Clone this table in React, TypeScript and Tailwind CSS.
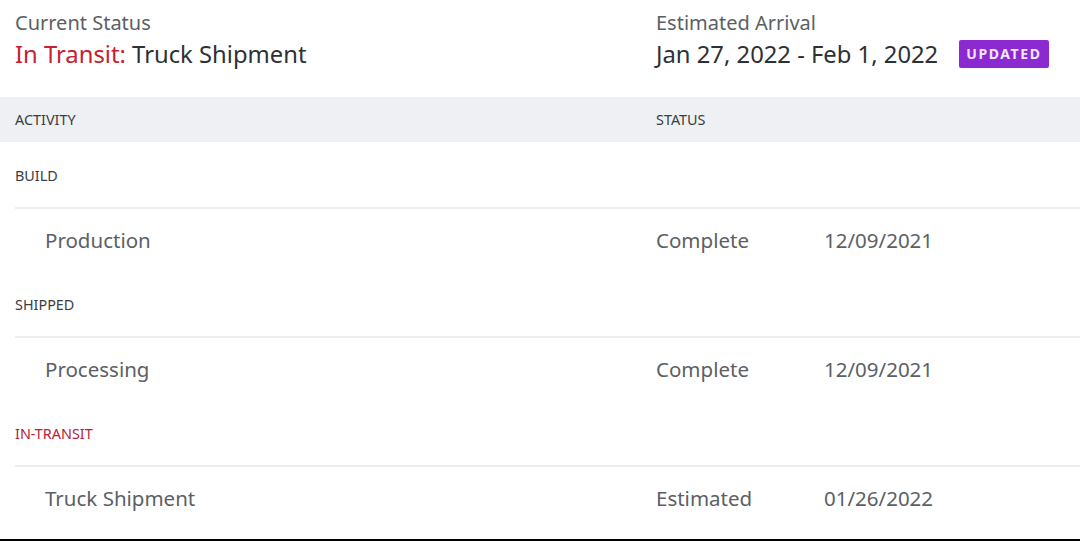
import React from "react";

const font = { fontFamily: '"Noto Sans", "Open Sans", sans-serif' };

type Item = { label: string; status: string; date: string };
type Group = { name: string; red?: boolean; items: Item[] };

const groups: Group[] = [
  { name: "BUILD", items: [{ label: "Production", status: "Complete", date: "12/09/2021" }] },
  { name: "SHIPPED", items: [{ label: "Processing", status: "Complete", date: "12/09/2021" }] },
  { name: "IN-TRANSIT", red: true, items: [{ label: "Truck Shipment", status: "Estimated", date: "01/26/2022" }] },
];

export default function App() {
  return (
    <div className="w-[1080px] h-[541px] bg-white overflow-hidden flex flex-col" style={font}>
      <div className="h-[97px] flex pl-[15px] pt-[9px]">
        <div className="w-[641px] flex flex-col">
          <div className="text-[20px] leading-[28px] text-[#5b5f64]">Current Status</div>
          <div className="text-[23.8px] leading-[32px] mt-[1px] text-[#2d3135]">
            <span className="text-[#c8202f]">In Transit:</span> Truck Shipment
          </div>
        </div>
        <div className="flex flex-col">
          <div className="text-[20px] leading-[28px] text-[#5b5f64]">Estimated Arrival</div>
          <div className="flex items-center mt-[1px]">
            <span className="text-[23.8px] leading-[32px] text-[#2d3135]">Jan 27, 2022 - Feb 1, 2022</span>
            <span className="ml-[21px] bg-[#8a2ad0] text-[#f4e6ff] text-[14px] font-bold tracking-[1.6px] leading-[28px] px-[7px] rounded-[2px]">
              UPDATED
            </span>
          </div>
        </div>
      </div>
      <div className="h-[45px] bg-[#eef0f3] flex items-center pl-[15px] text-[14.4px] text-[#3a3d42]">
        <div className="w-[641px]">ACTIVITY</div>
        <div>STATUS</div>
      </div>
      {groups.map((g) => (
        <div key={g.name} className="flex flex-col">
          <div className={`h-[65px] flex items-center pl-[15px] pt-[2px] text-[14.4px] ${g.red ? "text-[#b8213a]" : "text-[#3a3d42]"}`}>
            {g.name}
          </div>
          {g.items.map((it) => (
            <div key={it.label} className="ml-[15px] border-t-2 border-[#eceef0] h-[64px] flex items-center text-[20.5px] text-[#5c6065]">
              <div className="w-[641px] pl-[30px]">{it.label}</div>
              <div className="w-[168px]">{it.status}</div>
              <div>{it.date}</div>
            </div>
          ))}
        </div>
      ))}
      <div className="flex-1" />
      <div className="h-[2px] bg-black" />
    </div>
  );
}
